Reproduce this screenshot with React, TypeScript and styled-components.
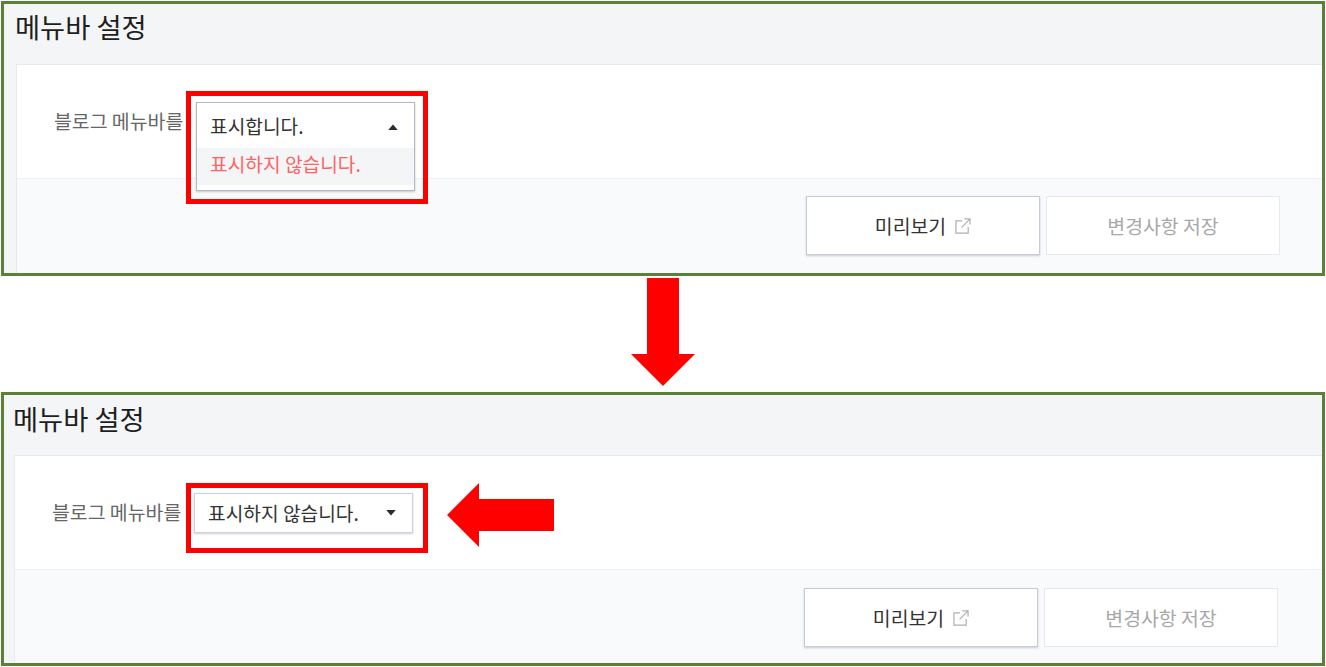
import React from "react";
import styled, { createGlobalStyle } from "styled-components";

const Global = createGlobalStyle`
  html, body { margin: 0; padding: 0; background: #fff; }
  body { font-family: "Noto Sans CJK KR", "Noto Sans", sans-serif; color: #333; }
`;

const Page = styled.div`
  width: 1326px;
  height: 667px;
  overflow: hidden;
  padding-top: 1px;
  box-sizing: border-box;
`;

const Panel = styled.section<{ $inset: number; $height: number }>`
  box-sizing: border-box;
  margin-left: 1px;
  width: 1324px;
  height: ${(p) => p.$height}px;
  border: 3px solid #5a8137;
  background: #f4f5f7;
  display: flex;
  flex-direction: column;
  padding-left: ${(p) => p.$inset}px;
  overflow: hidden;
`;

const Title = styled.h2<{ $line: number }>`
  margin: 0 0 0 -1px;
  height: 60px;
  box-sizing: border-box;
  font-size: 27.3px;
  font-weight: 400;
  line-height: ${(p) => p.$line}px;
  color: #1e1e1e;
  white-space: nowrap;
`;

const Card = styled.div`
  flex: 1;
  display: flex;
  flex-direction: column;
  border: 1px solid #e6e9f0;
  border-right: 0;
  border-bottom: 0;
  background: #fff;
  min-height: 0;
`;

const Row = styled.div`
  height: 114px;
  box-sizing: border-box;
  padding: 37px 0 0 37px;
  display: flex;
  align-items: flex-start;
  border-bottom: 1px solid #eef0f5;
`;

const Label = styled.span`
  width: 142px;
  flex: none;
  font-size: 19.4px;
  line-height: 38px;
  color: #666;
  white-space: nowrap;
`;

const SelectBox = styled.div`
  position: relative;
  width: 219px;
  flex: none;
`;

const SelectHead = styled.div<{ $open: boolean }>`
  box-sizing: border-box;
  height: ${(p) => (p.$open ? 89 : 40)}px;
  background: #fff;
  border: 1px solid ${(p) => (p.$open ? "#b4b9c6" : "#ccd1de")};
  box-shadow: 0 1px 2px rgba(90, 100, 120, ${(p) => (p.$open ? 0.35 : 0.3)});
  font-size: 19.2px;
  color: #333;
  position: relative;
  z-index: 1;
`;

const Current = styled.div`
  box-sizing: border-box;
  height: 45px;
  line-height: 43px;
  padding: 2px 14px 0 13px;
  display: flex;
  align-items: center;
  justify-content: space-between;
  white-space: nowrap;
`;

const CurrentClosed = styled(Current)`
  height: 38px;
  line-height: 38px;
  padding-top: 0;
`;

const Option = styled.div`
  height: 37px;
  line-height: 33px;
  padding: 0 13px;
  background: #f4f5f7;
  color: #fd6464;
  white-space: nowrap;
`;

const Caret = styled.svg`
  width: 10px;
  height: 6px;
  flex: none;
  margin-right: 2px;
  fill: #2b2b2b;
`;

const Frame = styled.div<{ $l: number; $t: number; $r: number; $b: number }>`
  position: absolute;
  left: ${(p) => p.$l}px;
  top: ${(p) => p.$t}px;
  right: ${(p) => p.$r}px;
  bottom: ${(p) => p.$b}px;
  border: 5px solid #ff0000;
  pointer-events: none;
  z-index: 2;
`;

const LeftArrow = styled.svg`
  width: 107px;
  height: 64px;
  flex: none;
  margin: -10px 0 0 34px;
  fill: #ff0000;
  position: relative;
  z-index: 3;
`;

const Footer = styled.div<{ $pad: number; $top: number }>`
  flex: 1;
  background: #f9fafc;
  display: flex;
  justify-content: flex-end;
  align-items: flex-start;
  gap: 6px;
  padding: ${(p) => p.$top}px ${(p) => p.$pad}px 0 0;
`;

const Button = styled.button<{ $primary?: boolean }>`
  box-sizing: border-box;
  width: 234px;
  height: 59px;
  padding: 0;
  display: flex;
  align-items: center;
  justify-content: center;
  gap: 9px;
  background: #fff;
  font-family: inherit;
  font-size: 19.4px;
  border: 1px solid ${(p) => (p.$primary ? "#c6cbd6" : "#e6e9f0")};
  box-shadow: ${(p) => (p.$primary ? "0 1px 2px rgba(90,100,120,.3)" : "none")};
  color: ${(p) => (p.$primary ? "#333" : "#a8a8a8")};
`;

const LinkIcon = styled.svg`
  width: 16px;
  height: 16px;
  flex: none;
  fill: none;
  stroke: #b0b0b0;
  stroke-width: 1.3;
`;

const DownArrowSlot = styled.div`
  height: 116px;
  padding: 2px 0 0 631px;
  box-sizing: border-box;
  display: flex;
`;

const DownArrow = styled.svg`
  width: 64px;
  height: 108px;
  fill: #ff0000;
`;

function SettingsPanel({ open }: { open: boolean }) {
  return (
    <Panel $inset={open ? 12 : 10} $height={open ? 275 : 274}>
      <Title $line={open ? 45 : 46}>메뉴바 설정</Title>
      <Card>
        <Row>
          <Label>블로그 메뉴바를</Label>
          <SelectBox>
            {open ? (
              <SelectHead $open>
                <Current>
                  표시합니다.
                  <Caret viewBox="0 0 11 7"><path d="M5.5 0.5 11 7H0z" /></Caret>
                </Current>
                <Option>표시하지 않습니다.</Option>
              </SelectHead>
            ) : (
              <SelectHead $open={false}>
                <CurrentClosed>
                  표시하지 않습니다.
                  <Caret viewBox="0 0 11 7"><path d="M0 0h11L5.5 6.5z" /></Caret>
                </CurrentClosed>
              </SelectHead>
            )}
            {open ? (
              <Frame $l={-10} $t={-11} $r={-13} $b={-13} />
            ) : (
              <Frame $l={-8} $t={-10} $r={-15} $b={-20} />
            )}
          </SelectBox>
          {!open && (
            <LeftArrow viewBox="0 0 107 64">
              <path d="M0 32 32 0v16h75v32H32v16z" />
            </LeftArrow>
          )}
        </Row>
        <Footer $pad={open ? 42 : 44} $top={open ? 17 : 18}>
          <Button $primary>
            미리보기
            <LinkIcon viewBox="0 0 17 17">
              <path d="M7.5 3H1v13h13V9.5" />
              <path d="M7 10 15.5 1.5M10 1h6v6" />
            </LinkIcon>
          </Button>
          <Button>변경사항 저장</Button>
        </Footer>
      </Card>
    </Panel>
  );
}

export default function App() {
  return (
    <Page>
      <Global />
      <SettingsPanel open />
      <DownArrowSlot>
        <DownArrow viewBox="0 0 64 108">
          <path d="M16 0h32v76h16L32 108 0 76h16z" />
        </DownArrow>
      </DownArrowSlot>
      <SettingsPanel open={false} />
    </Page>
  );
}
